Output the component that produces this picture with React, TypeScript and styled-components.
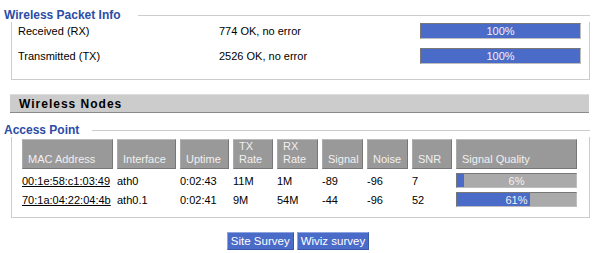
import styled, { createGlobalStyle } from "styled-components";

const GlobalStyle = createGlobalStyle`
  body {
    margin: 0;
    background: #ffffff;
    font-family: "Liberation Sans", Arial, sans-serif;
    font-size: 11px;
    color: #000000;
  }
`;

const Page = styled.div`
  width: 594px;
  padding-top: 8px;
`;

const Section = styled.section`
  margin: 0 4px 0 4px;
`;

const LegendRow = styled.div`
  display: flex;
  align-items: center;
  height: 14px;
`;

const Legend = styled.span`
  font-weight: bold;
  font-size: 12px;
  color: #2c4ca6;
  white-space: nowrap;
`;

const LegendLine = styled.div<{ $gap: number }>`
  flex: 1;
  margin-left: ${(p) => p.$gap}px;
  border-top: 1px solid #cccccc;
  height: 0;
`;

const Body = styled.div<{ $bottom: number }>`
  margin-left: 7px;
  border: 1px solid #cccccc;
  border-top: none;
  padding: 1px 0 ${(p) => p.$bottom}px 6px;
`;

const InfoRow = styled.div`
  display: grid;
  grid-template-columns: 201px 201px 161px;
  align-items: center;
  height: 16px;
  & + & {
    margin-top: 9px;
  }
`;

const Bar = styled.div<{ $height: number }>`
  position: relative;
  height: ${(p) => p.$height}px;
  box-sizing: border-box;
  background: #aaaaaa;
  border-top: 1px solid #777777;
  border-left: 1px solid #777777;
  border-bottom: 1px solid #bdbdbd;
  border-right: 1px solid #bdbdbd;
  overflow: hidden;
`;

const BarFill = styled.div`
  height: 100%;
  background: #4a6bc8;
`;

const BarLabel = styled.span`
  position: absolute;
  inset: 0;
  display: flex;
  align-items: center;
  justify-content: center;
  color: #f2f2f2;
  font-size: 11px;
`;

const NodesHeader = styled.div`
  margin: 14px 5px 0 10px;
  height: 19px;
  box-sizing: border-box;
  background: #cccccc;
  border-top: 1px solid #dedede;
  border-bottom: 1px solid #8a8a8a;
  padding-left: 9px;
  display: flex;
  align-items: center;
  font-weight: bold;
  font-size: 12px;
  letter-spacing: 1px;
`;

const NodesSection = styled(Section)`
  margin-top: 10px;
`;

const Table = styled.div`
  display: grid;
  grid-template-columns: 91px 59px 49px 40px 41px 41px 41px 40px 121px;
  grid-auto-rows: 15px;
  grid-template-rows: 30px;
  column-gap: 4px;
  row-gap: 4px;
  padding-top: 1px;
  padding-left: 4px;
  align-items: center;
`;

const HeadCell = styled.div`
  align-self: stretch;
  box-sizing: border-box;
  background: #999999;
  border-top: 1px solid #bbbbbb;
  border-left: 1px solid #aaaaaa;
  border-right: 1px solid #777777;
  border-bottom: 1px solid #777777;
  color: #f0f0f0;
  padding: 0 0 2px 5px;
  display: flex;
  flex-direction: column;
  justify-content: flex-end;
  line-height: 13px;
`;

const Cell = styled.div`
  white-space: nowrap;
`;

const MacLink = styled.a`
  color: #000000;
  text-decoration: underline;
`;

const Buttons = styled.div`
  display: flex;
  justify-content: center;
  gap: 3px;
  margin-top: 14px;
  padding-left: 2px;
`;

const Button = styled.button`
  font-family: "Liberation Sans", Arial, sans-serif;
  font-size: 11.5px;
  height: 18px;
  padding: 0 3px;
  background: #4a6bc8;
  color: #ffffff;
  border: 1px solid;
  border-color: #8fa3dd #3a58a8 #3a58a8 #8fa3dd;
  cursor: pointer;
`;

const packets = [
  { label: "Received (RX)", value: "774 OK, no error", pct: 100 },
  { label: "Transmitted (TX)", value: "2526 OK, no error", pct: 100 },
];

const nodes = [
  { mac: "00:1e:58:c1:03:49", iface: "ath0", uptime: "0:02:43", tx: "11M", rx: "1M", signal: "-89", noise: "-96", snr: "7", quality: 6 },
  { mac: "70:1a:04:22:04:4b", iface: "ath0.1", uptime: "0:02:41", tx: "9M", rx: "54M", signal: "-44", noise: "-96", snr: "52", quality: 61 },
];

const headers: string[][] = [
  ["MAC Address"],
  ["Interface"],
  ["Uptime"],
  ["TX", "Rate"],
  ["RX", "Rate"],
  ["Signal"],
  ["Noise"],
  ["SNR"],
  ["Signal Quality"],
];

const Meter = ({ pct, height }: { pct: number; height: number }) => (
  <Bar $height={height}>
    <BarFill style={{ width: pct + "%" }} />
    <BarLabel>{pct}%</BarLabel>
  </Bar>
);

export default function App() {
  return (
    <Page>
      <GlobalStyle />
      <Section>
        <LegendRow>
          <Legend>Wireless Packet Info</Legend>
          <LegendLine $gap={17} />
        </LegendRow>
        <Body $bottom={15}>
          {packets.map((p) => (
            <InfoRow key={p.label}>
              <span>{p.label}</span>
              <span>{p.value}</span>
              <Meter pct={p.pct} height={16} />
            </InfoRow>
          ))}
        </Body>
      </Section>

      <NodesHeader>Wireless Nodes</NodesHeader>

      <NodesSection>
        <LegendRow>
          <Legend>Access Point</Legend>
          <LegendLine $gap={13} />
        </LegendRow>
        <Body $bottom={10}>
          <Table>
            {headers.map((h) => (
              <HeadCell key={h.join(" ")}>
                {h.map((line) => (
                  <span key={line}>{line}</span>
                ))}
              </HeadCell>
            ))}
            {nodes.map((n) => [
              <Cell key={n.mac + "m"}>
                <MacLink href="#">{n.mac}</MacLink>
              </Cell>,
              <Cell key={n.mac + "i"}>{n.iface}</Cell>,
              <Cell key={n.mac + "u"}>{n.uptime}</Cell>,
              <Cell key={n.mac + "t"}>{n.tx}</Cell>,
              <Cell key={n.mac + "r"}>{n.rx}</Cell>,
              <Cell key={n.mac + "s"}>{n.signal}</Cell>,
              <Cell key={n.mac + "n"}>{n.noise}</Cell>,
              <Cell key={n.mac + "q"}>{n.snr}</Cell>,
              <Meter key={n.mac + "b"} pct={n.quality} height={15} />,
            ])}
          </Table>
        </Body>
      </NodesSection>

      <Buttons>
        <Button>Site Survey</Button>
        <Button>Wiviz survey</Button>
      </Buttons>
    </Page>
  );
}
